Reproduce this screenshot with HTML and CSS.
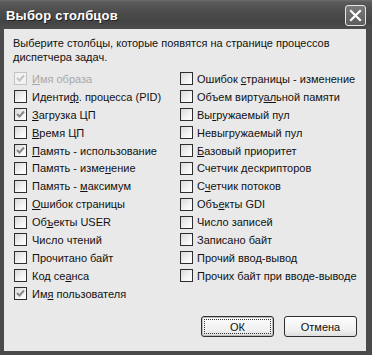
FILE: index.html
```
<!DOCTYPE html>
<html lang="ru">
<head>
    <meta charset="utf-8" />
    <title>Выбор столбцов</title>
    <link rel="stylesheet" href="styles.css">
</head>
<body>
    <div class="window">
        <div class="titlebar">
            <span class="title">Выбор столбцов</span>
            <span class="close">
                <svg width="13" height="13" viewBox="0 0 13 13">
                    <path d="M2 2 L11 11 M11 2 L2 11" stroke="#fff" stroke-width="2.2" stroke-linecap="square" />
                </svg>
            </span>
        </div>
        <div class="frame">
            <p class="intro">Выберите столбцы, которые появятся на странице процессов диспетчера задач.</p>

            <div class="columns">
                <ul class="col col-left">
                    <li class="disabled"><span class="box checked"></span><span><u>И</u>мя образа</span></li>
                    <li><span class="box"></span><span>Иденти<u>ф</u>. процесса (PID)</span></li>
                    <li><span class="box checked"></span><span><u>З</u>агрузка ЦП</span></li>
                    <li><span class="box"></span><span><u>В</u>ремя ЦП</span></li>
                    <li><span class="box checked"></span><span><u>П</u>амять - использование</span></li>
                    <li><span class="box"></span><span>Память - изме<u>н</u>ение</span></li>
                    <li><span class="box"></span><span>Память - <u>м</u>аксимум</span></li>
                    <li><span class="box"></span><span><u>О</u>шибок страницы</span></li>
                    <li><span class="box"></span><span>Об<u>ъ</u>екты USER</span></li>
                    <li><span class="box"></span><span>Число чтений</span></li>
                    <li><span class="box"></span><span>Прочитано байт</span></li>
                    <li><span class="box"></span><span>Код се<u>а</u>нса</span></li>
                    <li><span class="box checked"></span><span>Им<u>я</u> пользователя</span></li>
                </ul>
                <ul class="col col-right">
                    <li><span class="box"></span><span>Ошибок <u>с</u>траницы - изменение</span></li>
                    <li><span class="box"></span><span>Объем вирту<u>ал</u>ьной памяти</span></li>
                    <li><span class="box"></span><span>Вы<u>г</u>ружаемый пул</span></li>
                    <li><span class="box"></span><span>Невыгружаемый пул</span></li>
                    <li><span class="box"></span><span><u>Б</u>азовый приоритет</span></li>
                    <li><span class="box"></span><span>Счетчик <u>д</u>ескрипторов</span></li>
                    <li><span class="box"></span><span>С<u>ч</u>етчик потоков</span></li>
                    <li><span class="box"></span><span>Объ<u>е</u>кты GDI</span></li>
                    <li><span class="box"></span><span>Число записей</span></li>
                    <li><span class="box"></span><span>Записано байт</span></li>
                    <li><span class="box"></span><span>Прочий ввод-вывод</span></li>
                    <li><span class="box"></span><span>Прочих байт при вводе-выводе</span></li>
                </ul>
            </div>

            <div class="buttons">
                <button class="btn btn-default"><span class="focus">ОК</span></button>
                <button class="btn">Отмена</button>
            </div>
        </div>
    </div>
</body>
</html>
```

FILE: styles.css
```
* {
    padding: 0;
    margin: 0;
    box-sizing: border-box;
}

body {
    background: #e9e9e9;
    font-family: "Liberation Sans", Arial, sans-serif;
    font-size: 11px;
    color: #111;
}

.window {
    width: 372px;
    height: 355px;
    display: flex;
    flex-direction: column;
    background: #4a4a4a;
}

.titlebar {
    height: 29px;
    flex: none;
    display: flex;
    align-items: center;
    justify-content: space-between;
    padding: 0 6px 0 6px;
    background: linear-gradient(#6e6e6e 0px, #5a5a5a 2px, #4c4c4c 12px, #444 22px, #4e4e4e 29px);
}

.title {
    color: #fff;
    font-weight: bold;
    font-size: 13px;
    letter-spacing: 0.2px;
    text-shadow: 1px 1px 0 #222;
    padding-top: 1px;
}

.close {
    width: 21px;
    height: 21px;
    margin-top: 1px;
    border: 1px solid #e6e6e6;
    border-radius: 3px;
    background: linear-gradient(#7a7a7a, #5c5c5c);
    display: flex;
    align-items: center;
    justify-content: center;
}

.frame {
    flex: 1;
    background: #e9e9e9;
    margin: 0 6px 4px 4px;
    display: flex;
    flex-direction: column;
}

.intro {
    padding: 7px 20px 0 9px;
    line-height: 14px;
}

.columns {
    display: flex;
    margin-top: 6px;
    padding-left: 10px;
}

.col {
    list-style: none;
}

.col-left {
    width: 166px;
}

.col li {
    height: 17.9px;
    display: flex;
    align-items: center;
    white-space: nowrap;
}

.col-left li .box {
    margin-right: 5px;
}

.box {
    width: 13px;
    height: 13px;
    flex: none;
    margin-right: 4px;
    border: 1px solid #2e2e2e;
    background: linear-gradient(135deg, #d8d8d8, #f4f4f4 60%, #fff);
}

.box.checked {
    background-image:
        url("data:image/svg+xml;utf8,<svg xmlns='http://www.w3.org/2000/svg' width='11' height='11'><path d='M2 5 L4.5 7.5 L9 2.5' fill='none' stroke='%23888' stroke-width='2'/></svg>"),
        linear-gradient(135deg, #d8d8d8, #f4f4f4 60%, #fff);
}

.disabled {
    color: #a8a8a8;
}

.disabled .box {
    border-color: #c4c4c4;
    background: #f2f2f2;
}

.disabled .box.checked {
    background-image:
        url("data:image/svg+xml;utf8,<svg xmlns='http://www.w3.org/2000/svg' width='11' height='11'><path d='M2 5 L4.5 7.5 L9 2.5' fill='none' stroke='%23c2c2c2' stroke-width='2'/></svg>");
}

.buttons {
    margin-top: auto;
    display: flex;
    justify-content: flex-end;
    gap: 10px;
    padding: 0 9px 14px 0;
}

.btn {
    width: 73px;
    height: 21px;
    font-family: "Liberation Sans", Arial, sans-serif;
    font-size: 11px;
    color: #111;
    border: 1px solid #2e2e2e;
    border-radius: 3px;
    background: linear-gradient(#fdfdfd, #f0f0f0 70%, #dedede);
    display: flex;
    align-items: center;
    justify-content: center;
}

.btn-default {
    box-shadow: inset 0 0 0 1px #bdbdbd;
    padding: 2px;
}

.focus {
    width: 100%;
    height: 100%;
    border: 1px dotted #333;
    display: flex;
    align-items: center;
    justify-content: center;
}
```
